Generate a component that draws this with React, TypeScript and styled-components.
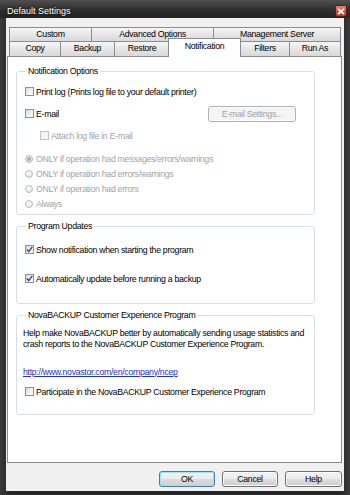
import styled, { createGlobalStyle } from "styled-components"

const GlobalStyle = createGlobalStyle`
  * { box-sizing: border-box; }
  html, body { margin: 0; padding: 0; background: #232323; }
  body {
    font-family: "Liberation Sans", Arial, sans-serif;
    font-size: 8.75px;
    letter-spacing: -0.3px;
    color: #000;
  }
`

const Window = styled.div`
  width: 350px;
  height: 495px;
  display: flex;
  flex-direction: column;
  background: linear-gradient(to right, #3a3a3a, #262626 3%, #262626 97%, #3a3a3a);
`

const TitleBar = styled.div`
  height: 18px;
  display: flex;
  align-items: center;
  justify-content: space-between;
  padding: 3px 3px 0 7px;
  background: linear-gradient(#505050, #2c2c2c 60%, #232323);
`

const TitleText = styled.span`
  color: #fff;
  font-size: 9px;
  letter-spacing: 0;
  text-shadow: 0 0 3px rgba(0, 0, 0, 0.9);
`

const CloseButton = styled.div`
  width: 12px;
  height: 12px;
  margin-top: 1px;
  border: 1px solid #5a1a10;
  border-radius: 2px;
  background: linear-gradient(#eb8a72, #d4523a 50%, #b93620);
  display: flex;
  align-items: center;
  justify-content: center;
`

const Client = styled.div`
  flex: 1;
  margin: 0 6px 4px;
  background: #f0f0f0;
  display: flex;
  flex-direction: column;
  padding-top: 9px;
`

const TabStrip = styled.div`
  display: flex;
  flex-direction: column;
  margin: 0 3px;
`

const TabRow = styled.div<{ $h: number }>`
  display: flex;
  height: ${(p) => p.$h}px;
`

const Tab = styled.div<{ $w: number; $active?: boolean }>`
  width: ${(p) => p.$w}px;
  border: 1px solid #898c95;
  border-bottom: none;
  border-right: none;
  text-align: center;
  white-space: nowrap;
  line-height: 12px;
  background: linear-gradient(#f6f6f6, #e6e6e6 50%, #d9d9d9);
  &:last-child {
    border-right: 1px solid #898c95;
  }
  ${(p) =>
    p.$active &&
    `
    position: relative;
    z-index: 1;
    background: #fff;
    border-right: 1px solid #898c95;
    height: 19px;
    margin: -3px -1px 0 -1px;
    width: ${p.$w + 2}px;
    line-height: 13px;
    padding-top: 1px;
  `}
`

const Panel = styled.div`
  flex: 1;
  background: #fff;
  border: 1px solid #898c95;
  margin: 0 2px 0 1px;
  padding: 0 0 0 8px;
`

const Group = styled.fieldset<{ $mt: number; $pb: number }>`
  width: 299px;
  margin: ${(p) => p.$mt}px 0 0;
  padding: 0 18px ${(p) => p.$pb}px 6px;
  border: 1px solid #d5dfe5;
  border-radius: 3px;
  min-width: 0;
`

const Legend = styled.legend`
  padding: 0 2px;
  margin-left: 3px;
  line-height: 11px;
`

const Row = styled.div<{ $mt?: number; $indent?: number; $h?: number; $disabled?: boolean; $gap?: number }>`
  display: flex;
  align-items: center;
  height: ${(p) => p.$h ?? 14}px;
  margin-top: ${(p) => p.$mt ?? 0}px;
  margin-left: ${(p) => 2 + (p.$indent ?? 0)}px;
  gap: ${(p) => p.$gap ?? 2}px;
  white-space: nowrap;
  color: ${(p) => (p.$disabled ? "#a3a3a3" : "#000")};
`

const Box = styled.span<{ $disabled?: boolean }>`
  width: 9px;
  height: 9px;
  flex: none;
  border: 1px solid ${(p) => (p.$disabled ? "#c4c4c4" : "#8e8f8f")};
  background: ${(p) =>
    p.$disabled ? "#f4f4f4" : "linear-gradient(135deg, #d6d6d6, #f4f4f4 60%, #fdfdfd)"};
  display: flex;
  align-items: center;
  justify-content: center;
`

const Radio = styled.span<{ $on?: boolean }>`
  width: 8px;
  height: 8px;
  flex: none;
  border-radius: 50%;
  border: 1px solid #b9b9b9;
  background: radial-gradient(circle at 40% 35%, #fbfbfb, #e2e2e2);
  display: flex;
  align-items: center;
  justify-content: center;
  &::after {
    content: "";
    display: ${(p) => (p.$on ? "block" : "none")};
    width: 4px;
    height: 4px;
    border-radius: 50%;
    background: #a9a9a9;
  }
`

const SmallButton = styled.button<{ $w: number; $default?: boolean; $disabled?: boolean }>`
  width: ${(p) => p.$w}px;
  height: 16px;
  padding: 0;
  font: inherit;
  letter-spacing: inherit;
  border-radius: 3px;
  border: 1px solid ${(p) => (p.$disabled ? "#adb2b5" : p.$default ? "#3c7fb1" : "#707070")};
  background: ${(p) =>
    p.$disabled ? "#f4f4f4" : "linear-gradient(#f2f2f2, #ebebeb 50%, #dddddd 50%, #cfcfcf)"};
  color: ${(p) => (p.$disabled ? "#a3a3a3" : "#000")};
  box-shadow: ${(p) => (p.$default ? "inset 0 0 0 1px #9fe3fb" : "inset 0 0 0 1px #fcfcfc")};
  margin-left: ${(p) => (p.$disabled ? "auto" : "0")};
`

const Para = styled.p<{ $mt: number }>`
  margin: ${(p) => p.$mt}px 0 0;
  line-height: 10.5px;
  white-space: nowrap;
`

const Link = styled.a`
  display: block;
  margin-top: 17.5px;
  line-height: 10.5px;
  color: #1d2fd6;
  text-decoration: underline;
`

const ButtonRow = styled.div`
  display: flex;
  justify-content: flex-end;
  gap: 7px;
  padding: 8px 2px 4px 0;
`

function Check({ checked, disabled }: { checked?: boolean; disabled?: boolean }) {
  return (
    <Box $disabled={disabled}>
      {checked && (
        <svg width="7" height="7" viewBox="0 0 7 7">
          <path d="M0.8 3.6 L2.7 5.6 L6.3 0.9" fill="none" stroke="#2a4a8e" strokeWidth="1.4" />
        </svg>
      )}
    </Box>
  )
}

export default function App() {
  return (
    <>
      <GlobalStyle />
      <Window>
        <TitleBar>
          <TitleText>Default Settings</TitleText>
          <CloseButton>
            <svg width="8" height="7" viewBox="0 0 8 7">
              <path d="M1 0.8 L7 6.2 M7 0.8 L1 6.2" stroke="#fff" strokeWidth="1.8" />
            </svg>
          </CloseButton>
        </TitleBar>
        <Client>
          <TabStrip>
            <TabRow $h={14}>
              <Tab $w={82}>Custom</Tab>
              <Tab $w={122}>Advanced Options</Tab>
              <Tab $w={128}>Management Server</Tab>
            </TabRow>
            <TabRow $h={15}>
              <Tab $w={51}>Copy</Tab>
              <Tab $w={54}>Backup</Tab>
              <Tab $w={55}>Restore</Tab>
              <Tab $w={71} $active>
                Notification
              </Tab>
              <Tab $w={49}>Filters</Tab>
              <Tab $w={52}>Run As</Tab>
            </TabRow>
          </TabStrip>
          <Panel>
            <Group $mt={9} $pb={3}>
              <Legend>Notification Options</Legend>
              <Row $mt={7.5}>
                <Check />
                <span>Print log (Prints log file to your default printer)</span>
              </Row>
              <Row $mt={7} $h={16}>
                <Check />
                <span>E-mail</span>
                <SmallButton $w={88} $disabled disabled>
                  E-mail Settings...
                </SmallButton>
              </Row>
              <Row $mt={7} $indent={15} $disabled>
                <Check disabled />
                <span>Attach log file in E-mail</span>
              </Row>
              <Row $mt={8.5} $h={15} $gap={3} $disabled>
                <Radio $on />
                <span>ONLY if operation had messages/errors/warnings</span>
              </Row>
              <Row $h={15} $gap={3} $disabled>
                <Radio />
                <span>ONLY if operation had errors/warnings</span>
              </Row>
              <Row $h={15} $gap={3} $disabled>
                <Radio />
                <span>ONLY if operation had errors</span>
              </Row>
              <Row $h={15} $gap={3} $disabled>
                <Radio />
                <span>Always</span>
              </Row>
            </Group>

            <Group $mt={5.5} $pb={17}>
              <Legend>Program Updates</Legend>
              <Row $mt={11}>
                <Check checked />
                <span>Show notification when starting the program</span>
              </Row>
              <Row $mt={15}>
                <Check checked />
                <span>Automatically update before running a backup</span>
              </Row>
            </Group>

            <Group $mt={6.5} $pb={15.5}>
              <Legend>NovaBACKUP Customer Experience Program</Legend>
              <Para $mt={7}>
                Help make NovaBACKUP better by automatically sending usage statistics and
                <br />
                crash reports to the NovaBACKUP Customer Experience Program.
              </Para>
              <Link href="#">http://www.novastor.com/en/company/ncep</Link>
              <Row $mt={7.5}>
                <Check />
                <span>Participate in the NovaBACKUP Customer Experience Program</span>
              </Row>
            </Group>
          </Panel>
          <ButtonRow>
            <SmallButton $w={56} $default>
              OK
            </SmallButton>
            <SmallButton $w={56}>Cancel</SmallButton>
            <SmallButton $w={57}>Help</SmallButton>
          </ButtonRow>
        </Client>
      </Window>
    </>
  )
}
